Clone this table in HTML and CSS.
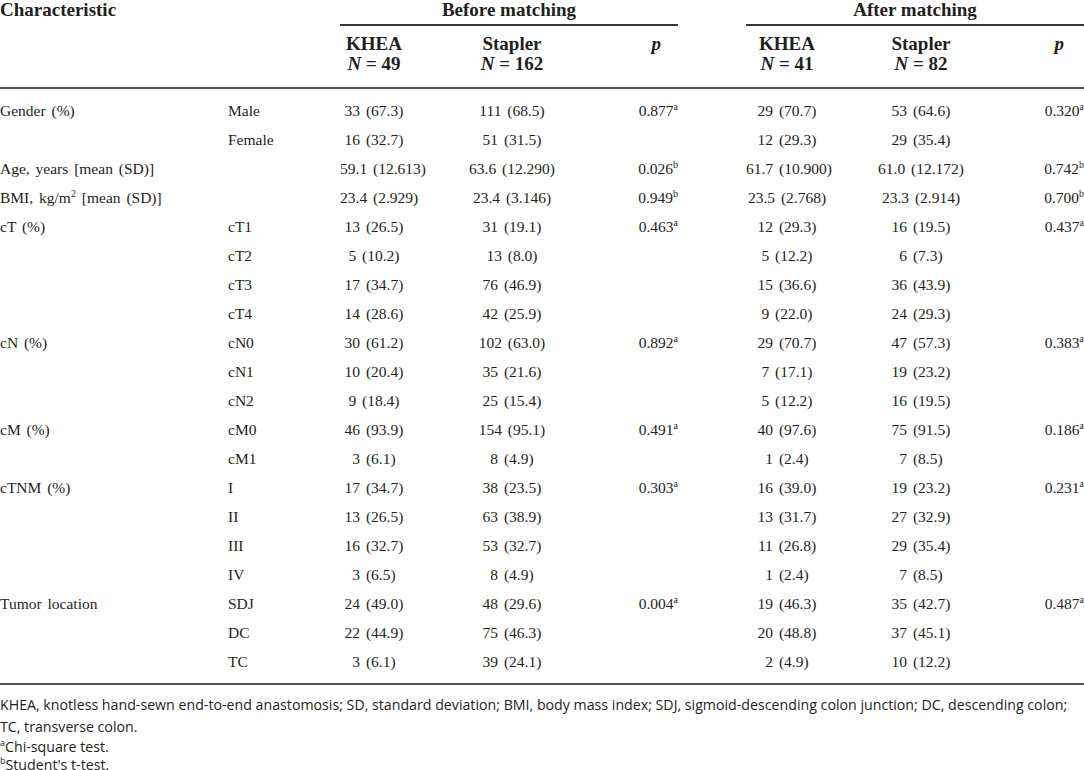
FILE: index.html
```html
<!DOCTYPE html>
<html lang="en">
<head>
<meta charset="utf-8">
<title>Table</title>
<link rel="stylesheet" href="styles.css">
</head>
<body>
<div class="tbl">
  <div class="hc h-char">Characteristic</div>
  <div class="hc h-group g-before">Before matching</div>
  <div class="hc h-group g-after">After matching</div>

  <div class="hc h-sub c3">KHEA<br><i>N</i> = 49</div>
  <div class="hc h-sub c4">Stapler<br><i>N</i> = 162</div>
  <div class="hc h-sub h-p c5"><i>p</i></div>
  <div class="hc h-sub c7">KHEA<br><i>N</i> = 41</div>
  <div class="hc h-sub c8">Stapler<br><i>N</i> = 82</div>
  <div class="hc h-sub h-p c9"><i>p</i></div>
  <div class="rule head-rule"></div>

  <div class="pad"></div>

  <div class="l1">Gender (%)</div><div class="l2">Male</div><div class="v">33 (67.3)</div><div class="v">111 (68.5)</div><div class="p">0.877<sup>a</sup></div><div></div><div class="v">29 (70.7)</div><div class="v">53 (64.6)</div><div class="p">0.320<sup>a</sup></div>
  <div class="l1"></div><div class="l2">Female</div><div class="v">16 (32.7)</div><div class="v">51 (31.5)</div><div class="p"></div><div></div><div class="v">12 (29.3)</div><div class="v">29 (35.4)</div><div class="p"></div>
  <div class="l1">Age, years [mean (SD)]</div><div class="l2"></div><div class="v">59.1 (12.613)</div><div class="v">63.6 (12.290)</div><div class="p">0.026<sup>b</sup></div><div></div><div class="v">61.7 (10.900)</div><div class="v">61.0 (12.172)</div><div class="p">0.742<sup>b</sup></div>
  <div class="l1">BMI, kg/m<sup class="sq">2</sup> [mean (SD)]</div><div class="l2"></div><div class="v">23.4 (2.929)</div><div class="v">23.4 (3.146)</div><div class="p">0.949<sup>b</sup></div><div></div><div class="v">23.5 (2.768)</div><div class="v">23.3 (2.914)</div><div class="p">0.700<sup>b</sup></div>
  <div class="l1">cT (%)</div><div class="l2">cT1</div><div class="v">13 (26.5)</div><div class="v">31 (19.1)</div><div class="p">0.463<sup>a</sup></div><div></div><div class="v">12 (29.3)</div><div class="v">16 (19.5)</div><div class="p">0.437<sup>a</sup></div>
  <div class="l1"></div><div class="l2">cT2</div><div class="v">5 (10.2)</div><div class="v">13 (8.0)</div><div class="p"></div><div></div><div class="v">5 (12.2)</div><div class="v">6 (7.3)</div><div class="p"></div>
  <div class="l1"></div><div class="l2">cT3</div><div class="v">17 (34.7)</div><div class="v">76 (46.9)</div><div class="p"></div><div></div><div class="v">15 (36.6)</div><div class="v">36 (43.9)</div><div class="p"></div>
  <div class="l1"></div><div class="l2">cT4</div><div class="v">14 (28.6)</div><div class="v">42 (25.9)</div><div class="p"></div><div></div><div class="v">9 (22.0)</div><div class="v">24 (29.3)</div><div class="p"></div>
  <div class="l1">cN (%)</div><div class="l2">cN0</div><div class="v">30 (61.2)</div><div class="v">102 (63.0)</div><div class="p">0.892<sup>a</sup></div><div></div><div class="v">29 (70.7)</div><div class="v">47 (57.3)</div><div class="p">0.383<sup>a</sup></div>
  <div class="l1"></div><div class="l2">cN1</div><div class="v">10 (20.4)</div><div class="v">35 (21.6)</div><div class="p"></div><div></div><div class="v">7 (17.1)</div><div class="v">19 (23.2)</div><div class="p"></div>
  <div class="l1"></div><div class="l2">cN2</div><div class="v">9 (18.4)</div><div class="v">25 (15.4)</div><div class="p"></div><div></div><div class="v">5 (12.2)</div><div class="v">16 (19.5)</div><div class="p"></div>
  <div class="l1">cM (%)</div><div class="l2">cM0</div><div class="v">46 (93.9)</div><div class="v">154 (95.1)</div><div class="p">0.491<sup>a</sup></div><div></div><div class="v">40 (97.6)</div><div class="v">75 (91.5)</div><div class="p">0.186<sup>a</sup></div>
  <div class="l1"></div><div class="l2">cM1</div><div class="v">3 (6.1)</div><div class="v">8 (4.9)</div><div class="p"></div><div></div><div class="v">1 (2.4)</div><div class="v">7 (8.5)</div><div class="p"></div>
  <div class="l1">cTNM (%)</div><div class="l2">I</div><div class="v">17 (34.7)</div><div class="v">38 (23.5)</div><div class="p">0.303<sup>a</sup></div><div></div><div class="v">16 (39.0)</div><div class="v">19 (23.2)</div><div class="p">0.231<sup>a</sup></div>
  <div class="l1"></div><div class="l2">II</div><div class="v">13 (26.5)</div><div class="v">63 (38.9)</div><div class="p"></div><div></div><div class="v">13 (31.7)</div><div class="v">27 (32.9)</div><div class="p"></div>
  <div class="l1"></div><div class="l2">III</div><div class="v">16 (32.7)</div><div class="v">53 (32.7)</div><div class="p"></div><div></div><div class="v">11 (26.8)</div><div class="v">29 (35.4)</div><div class="p"></div>
  <div class="l1"></div><div class="l2">IV</div><div class="v">3 (6.5)</div><div class="v">8 (4.9)</div><div class="p"></div><div></div><div class="v">1 (2.4)</div><div class="v">7 (8.5)</div><div class="p"></div>
  <div class="l1">Tumor location</div><div class="l2">SDJ</div><div class="v">24 (49.0)</div><div class="v">48 (29.6)</div><div class="p">0.004<sup>a</sup></div><div></div><div class="v">19 (46.3)</div><div class="v">35 (42.7)</div><div class="p">0.487<sup>a</sup></div>
  <div class="l1"></div><div class="l2">DC</div><div class="v">22 (44.9)</div><div class="v">75 (46.3)</div><div class="p"></div><div></div><div class="v">20 (48.8)</div><div class="v">37 (45.1)</div><div class="p"></div>
  <div class="l1"></div><div class="l2">TC</div><div class="v">3 (6.1)</div><div class="v">39 (24.1)</div><div class="p"></div><div></div><div class="v">2 (4.9)</div><div class="v">10 (12.2)</div><div class="p"></div>

  <div class="pad"></div>
  <div class="rule foot-rule"></div>
</div>
<div class="notes">
  <p class="note-main">KHEA, knotless hand-sewn end-to-end anastomosis; SD, standard deviation; BMI, body mass index; SDJ, sigmoid-descending colon junction; DC, descending colon; TC, transverse colon.</p>
  <p class="note"><sup>a</sup>Chi-square test.</p>
  <p class="note"><sup>b</sup>Student's t-test.</p>
</div>
</body>
</html>
```

FILE: styles.css
```css
html, body {
  margin: 0;
  padding: 0;
  background: #ffffff;
}
body {
  width: 1084px;
  color: #231f20;
  font-family: "Liberation Serif", "Times New Roman", serif;
  overflow: hidden;
}
.tbl {
  display: grid;
  grid-template-columns: 228px 112px 68px 208px 62px 68px 82px 186px 70px;
  font-size: 15.5px;
  word-spacing: 2px;
}
.hc {
  font-weight: bold;
  font-size: 19px;
  line-height: 20px;
  word-spacing: 0;
}
.h-char {
  grid-column: 1 / 3;
  grid-row: 1;
  height: 25px;
}
.h-group {
  grid-row: 1;
  text-align: center;
  height: 24px;
  border-bottom: 2px solid #3a3a3a;
}
.g-before {
  grid-column: 3 / 6;
}
.g-after {
  grid-column: 7 / 10;
}
.h-sub {
  grid-row: 2;
  text-align: center;
  padding-top: 8px;
  height: 53px;
  white-space: nowrap;
}
.c3 { grid-column: 3; }
.c4 { grid-column: 4; }
.c5 { grid-column: 5; }
.c7 { grid-column: 7; }
.c8 { grid-column: 8; }
.c9 { grid-column: 9; }
.h-p {
  text-align: right;
  padding-right: 17px;
}
.c9.h-p {
  padding-right: 20px;
}
.rule {
  grid-column: 1 / -1;
  height: 2px;
  background: #555;
}
.pad {
  grid-column: 1 / -1;
  height: 7px;
}
.l1, .l2, .v, .p {
  height: 29px;
  line-height: 29px;
  white-space: nowrap;
}
.v {
  text-align: center;
}
.p {
  text-align: right;
  word-spacing: 0;
}
sup {
  font-size: 10px;
  line-height: 0;
  vertical-align: 6px;
  word-spacing: 0;
}
sup.sq {
  vertical-align: 6px;
}
.notes {
  font-family: "Open Sans", "Liberation Sans", sans-serif;
  font-size: 14.2px;
  color: #231f20;
  padding-top: 9px;
}
.notes p {
  margin: 0;
}
.note-main {
  line-height: 22px;
}
.note {
  line-height: 18px;
}
.notes sup {
  font-size: 9px;
  vertical-align: 6px;
}
```
